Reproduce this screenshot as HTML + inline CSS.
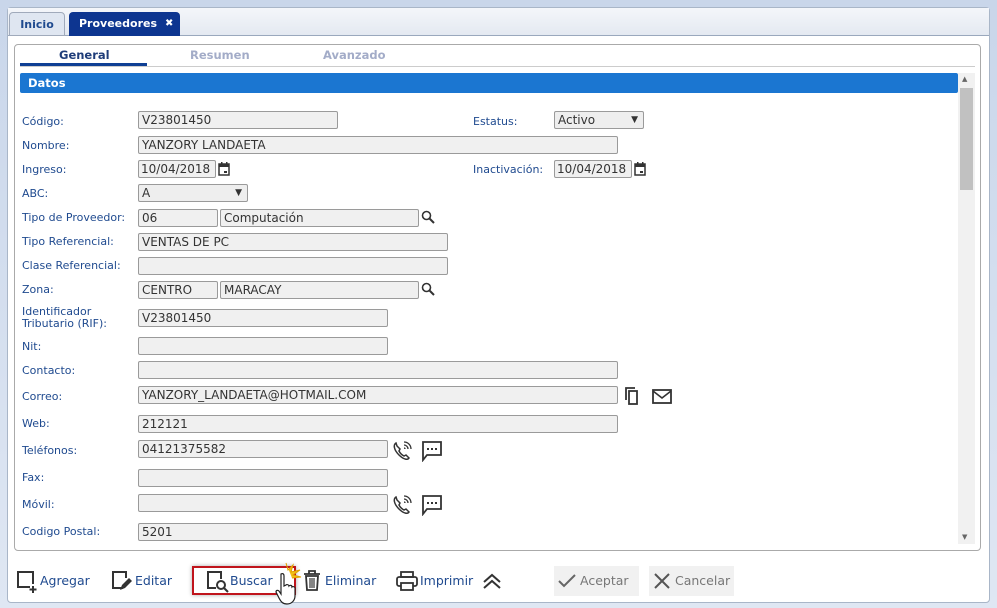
<!DOCTYPE html>
<html><head><meta charset="utf-8"><style>
*{box-sizing:border-box;margin:0;padding:0}
body{width:997px;height:608px;overflow:hidden;background:linear-gradient(#c9d6ea,#dfe7f3);font-family:"DejaVu Sans","Liberation Sans",sans-serif;font-size:11px;color:#1f4a8f;position:relative}
.a{position:absolute}
.outer{left:7px;top:7px;width:983px;height:596px;background:#fff;border:1px solid #a9b6c8;border-radius:4px}
.tabbar{left:8px;top:8px;width:981px;height:28px;background:linear-gradient(#f4f6fa,#e4e9f1);border-bottom:1px solid #9aa8bd}
.tab{top:12px;height:24px;border-radius:4px 4px 0 0;font-weight:bold;font-size:11px;line-height:23px;text-align:center}
.inner{left:14px;top:44px;width:967px;height:507px;border:1px solid #aaa;border-radius:4px;background:#fff}
.st{top:48px;font-weight:bold;font-size:11.5px;color:#a3acc8}
.lbl{left:22px;color:#1f4a8f;font-size:11px}
.in{height:18px;background:#f0f0f0;border:1px solid #9a9a9a;border-radius:2px;font-size:12px;color:#333;line-height:16px;padding-left:3px}
.btn{top:572px;font-size:12.5px;color:#1f4a8f;line-height:18px}
svg{position:absolute}
</style></head><body>
<div class="a outer"></div>
<div class="a tabbar"></div>
<div class="a tab" style="left:9px;width:56px;background:#dfe6f1;border:1px solid #a0aabb;color:#1f4a8f">Inicio</div>
<div class="a tab" style="left:69px;width:111px;background:#0d3590;color:#fff;text-align:left;padding-left:10px">Proveedores <span style="position:absolute;left:96px;font-size:10px">✖</span></div>
<div class="a inner"></div>
<div class="a st" style="left:59px;color:#1f3d79">General</div>
<div class="a" style="left:20px;top:63px;width:127px;height:3px;background:#0f3f94"></div>
<div class="a st" style="left:190px">Resumen</div>
<div class="a st" style="left:323px">Avanzado</div>
<div class="a" style="left:20px;top:66px;width:955px;height:1px;background:#ccc"></div>
<div class="a" style="left:20px;top:73px;width:938px;height:20px;background:#1b76d1;color:#fff;font-weight:bold;font-size:11.5px;line-height:20px;padding-left:8px;border-radius:2px">Datos</div>
<div class="a" style="left:958px;top:73px;width:17px;height:471px;background:#f1f1f1"></div>
<div class="a" style="left:960px;top:88px;width:13px;height:102px;background:#c1c1c1"></div>
<div class="a" style="left:962px;top:75px;font-size:7px;color:#666">▲</div>
<div class="a" style="left:962px;top:533px;font-size:7px;color:#666">▼</div>

<div class="a lbl" style="top:115px">Código:</div><div class="a in" style="left:138px;top:111px;width:200px">V23801450</div>
<div class="a lbl" style="left:473px;top:115px">Estatus:</div><div class="a in" style="left:554px;top:111px;width:90px;background:#eee">Activo<span style="position:absolute;right:5px;font-size:9px">▼</span></div>
<div class="a lbl" style="top:139px">Nombre:</div><div class="a in" style="left:138px;top:136px;width:480px">YANZORY LANDAETA</div>
<div class="a lbl" style="top:163px">Ingreso:</div><div class="a in" style="left:138px;top:160px;width:78px;padding-left:2px">10/04/2018</div>
<div class="a lbl" style="left:473px;top:163px">Inactivación:</div><div class="a in" style="left:554px;top:160px;width:78px;padding-left:2px">10/04/2018</div>
<svg style="left:218px;top:162px" width="12" height="14" viewBox="0 0 12 14"><rect x="1" y="2" width="10" height="11" fill="none" stroke="#333" stroke-width="1.5"/><rect x="1" y="2" width="10" height="3" fill="#333"/><rect x="6" y="9" width="3" height="2" fill="#333"/><rect x="3" y="0" width="1.5" height="3" fill="#333"/><rect x="8" y="0" width="1.5" height="3" fill="#333"/></svg>
<svg style="left:634px;top:162px" width="12" height="14" viewBox="0 0 12 14"><rect x="1" y="2" width="10" height="11" fill="none" stroke="#333" stroke-width="1.5"/><rect x="1" y="2" width="10" height="3" fill="#333"/><rect x="6" y="9" width="3" height="2" fill="#333"/><rect x="3" y="0" width="1.5" height="3" fill="#333"/><rect x="8" y="0" width="1.5" height="3" fill="#333"/></svg>
<div class="a lbl" style="top:187px">ABC:</div><div class="a in" style="left:138px;top:184px;width:110px;background:#eee">A<span style="position:absolute;right:5px;font-size:9px">▼</span></div>
<div class="a lbl" style="top:211px">Tipo de Proveedor:</div><div class="a in" style="left:138px;top:209px;width:80px">06</div><div class="a in" style="left:220px;top:209px;width:199px">Computación</div>
<svg style="left:421px;top:210px" width="14" height="14" viewBox="0 0 14 14"><circle cx="5.5" cy="5.5" r="4" fill="none" stroke="#333" stroke-width="1.6"/><path d="M8.5 8.5L13 13" stroke="#333" stroke-width="2"/></svg>
<div class="a lbl" style="top:235px">Tipo Referencial:</div><div class="a in" style="left:138px;top:233px;width:310px">VENTAS DE PC</div>
<div class="a lbl" style="top:259px">Clase Referencial:</div><div class="a in" style="left:138px;top:257px;width:310px"></div>
<div class="a lbl" style="top:283px">Zona:</div><div class="a in" style="left:138px;top:281px;width:80px">CENTRO</div><div class="a in" style="left:220px;top:281px;width:199px">MARACAY</div>
<svg style="left:421px;top:282px" width="14" height="14" viewBox="0 0 14 14"><circle cx="5.5" cy="5.5" r="4" fill="none" stroke="#333" stroke-width="1.6"/><path d="M8.5 8.5L13 13" stroke="#333" stroke-width="2"/></svg>
<div class="a lbl" style="top:306px;line-height:12px">Identificador<br>Tributario (RIF):</div><div class="a in" style="left:138px;top:309px;width:250px">V23801450</div>
<div class="a lbl" style="top:340px">Nit:</div><div class="a in" style="left:138px;top:337px;width:250px"></div>
<div class="a lbl" style="top:364px">Contacto:</div><div class="a in" style="left:138px;top:361px;width:480px"></div>
<div class="a lbl" style="top:390px">Correo:</div><div class="a in" style="left:138px;top:386px;width:480px">YANZORY_LANDAETA@HOTMAIL.COM</div>
<svg style="left:624px;top:386px" width="20" height="20" viewBox="0 0 20 20"><path d="M2 14V2h9" fill="none" stroke="#333" stroke-width="1.8"/><rect x="5" y="5" width="8" height="13" fill="none" stroke="#333" stroke-width="1.8"/></svg>
<svg style="left:652px;top:388px" width="20" height="18" viewBox="0 0 20 18"><rect x="1" y="2" width="18" height="13" fill="none" stroke="#333" stroke-width="1.8"/><path d="M1 3l9 7 9-7" fill="none" stroke="#333" stroke-width="1.6"/></svg>
<div class="a lbl" style="top:417px">Web:</div><div class="a in" style="left:138px;top:415px;width:480px">212121</div>
<div class="a lbl" style="top:444px">Teléfonos:</div><div class="a in" style="left:138px;top:440px;width:250px">04121375582</div>
<div class="a lbl" style="top:471px">Fax:</div><div class="a in" style="left:138px;top:469px;width:250px"></div>
<div class="a lbl" style="top:498px">Móvil:</div><div class="a in" style="left:138px;top:494px;width:250px"></div>
<div class="a lbl" style="top:525px">Codigo Postal:</div><div class="a in" style="left:138px;top:523px;width:250px">5201</div>
<svg style="left:392px;top:440px" width="22" height="20" viewBox="0 0 22 20"><path d="M4 3c-3 2-2 7 3 12s9 5 10 3l-3-3-2 1c-2-1-4-3-5-5l1-2-3-3z" fill="none" stroke="#333" stroke-width="1.5"/><path d="M12 5a4 4 0 0 1 4 4M12 2a7 7 0 0 1 7 7M12 8a1 1 0 0 1 1 1" fill="none" stroke="#333" stroke-width="1.3"/></svg>
<svg style="left:421px;top:440px" width="22" height="22" viewBox="0 0 22 22"><path d="M2 2h18v13H6l-4 5z" fill="none" stroke="#333" stroke-width="1.8"/><rect x="6" y="8" width="2" height="2" fill="#333"/><rect x="10" y="8" width="2" height="2" fill="#333"/><rect x="14" y="8" width="2" height="2" fill="#333"/></svg>
<svg style="left:392px;top:494px" width="22" height="20" viewBox="0 0 22 20"><path d="M4 3c-3 2-2 7 3 12s9 5 10 3l-3-3-2 1c-2-1-4-3-5-5l1-2-3-3z" fill="none" stroke="#333" stroke-width="1.5"/><path d="M12 5a4 4 0 0 1 4 4M12 2a7 7 0 0 1 7 7M12 8a1 1 0 0 1 1 1" fill="none" stroke="#333" stroke-width="1.3"/></svg>
<svg style="left:421px;top:494px" width="22" height="22" viewBox="0 0 22 22"><path d="M2 2h18v13H6l-4 5z" fill="none" stroke="#333" stroke-width="1.8"/><rect x="6" y="8" width="2" height="2" fill="#333"/><rect x="10" y="8" width="2" height="2" fill="#333"/><rect x="14" y="8" width="2" height="2" fill="#333"/></svg>

<svg style="left:16px;top:570px" width="22" height="24" viewBox="0 0 22 24"><path d="M14 17H2V2h15v12" fill="none" stroke="#333" stroke-width="2"/><path d="M17 16v7M13.5 19.5h7" stroke="#333" stroke-width="2"/></svg>
<div class="a btn" style="left:40px">Agregar</div>
<svg style="left:111px;top:570px" width="22" height="22" viewBox="0 0 22 22"><path d="M12 18H2V2h13v6" fill="none" stroke="#333" stroke-width="2"/><path d="M9 20l2-5 7-7 3 3-7 7z" fill="#333"/></svg>
<div class="a btn" style="left:135px">Editar</div>
<div class="a" style="left:192px;top:566px;width:104px;height:29px;border:2px solid #c0141c;box-shadow:0 0 4px #aaa"></div>
<svg style="left:206px;top:570px" width="24" height="24" viewBox="0 0 24 24"><path d="M10 18H2V2h13v7" fill="none" stroke="#333" stroke-width="2"/><circle cx="15" cy="15" r="4" fill="none" stroke="#333" stroke-width="2"/><path d="M18 18l4 4" stroke="#333" stroke-width="2"/></svg>
<div class="a btn" style="left:230px">Buscar</div>
<svg style="left:272px;top:562px" width="34" height="44" viewBox="0 0 34 44"><path d="M14 1l2 7 5-5-2 7 9-2-7 5 8 2-9 1" fill="#f3c01a" stroke="#e0a000"/><path d="M9 12c2-1 3 0 3 2v10l2-1c1-1 3 0 3 1 1-1 3-1 3 1 1-1 3 0 3 1v8c0 4-3 8-8 8-4 0-6-2-8-6l-3-6c0-2 2-2 3-1l2 3V14z" fill="#fff" stroke="#222" stroke-width="1.2"/></svg>
<svg style="left:302px;top:570px" width="20" height="22" viewBox="0 0 20 22"><path d="M2 4h16M7 4V1h6v3" fill="none" stroke="#333" stroke-width="1.8"/><path d="M4 6h12l-1 14H5z" fill="none" stroke="#333" stroke-width="1.8"/><path d="M8 8v10M10 8v10M12 8v10" stroke="#333" stroke-width="1.2"/></svg>
<div class="a btn" style="left:325px">Eliminar</div>
<svg style="left:396px;top:570px" width="22" height="22" viewBox="0 0 22 22"><rect x="5" y="2" width="12" height="5" fill="none" stroke="#333" stroke-width="1.8"/><rect x="1" y="7" width="20" height="9" rx="2" fill="none" stroke="#333" stroke-width="1.8"/><rect x="5" y="13" width="12" height="7" fill="#fff" stroke="#333" stroke-width="1.8"/></svg>
<div class="a btn" style="left:420px">Imprimir</div>
<svg style="left:482px;top:572px" width="20" height="18" viewBox="0 0 20 18"><path d="M2 10l8-7 8 7M2 16l8-7 8 7" fill="none" stroke="#333" stroke-width="2"/></svg>
<div class="a" style="left:554px;top:566px;width:85px;height:30px;background:#f1f1f1"></div>
<svg style="left:557px;top:573px" width="20" height="16" viewBox="0 0 20 16"><path d="M2 8l5 5L18 2" fill="none" stroke="#666" stroke-width="2"/></svg>
<div class="a btn" style="left:580px;color:#777">Aceptar</div>
<div class="a" style="left:649px;top:566px;width:85px;height:30px;background:#f1f1f1"></div>
<svg style="left:653px;top:572px" width="18" height="18" viewBox="0 0 18 18"><path d="M2 2l14 14M16 2L2 16" stroke="#555" stroke-width="2"/></svg>
<div class="a btn" style="left:675px;color:#777">Cancelar</div>
</body></html>
